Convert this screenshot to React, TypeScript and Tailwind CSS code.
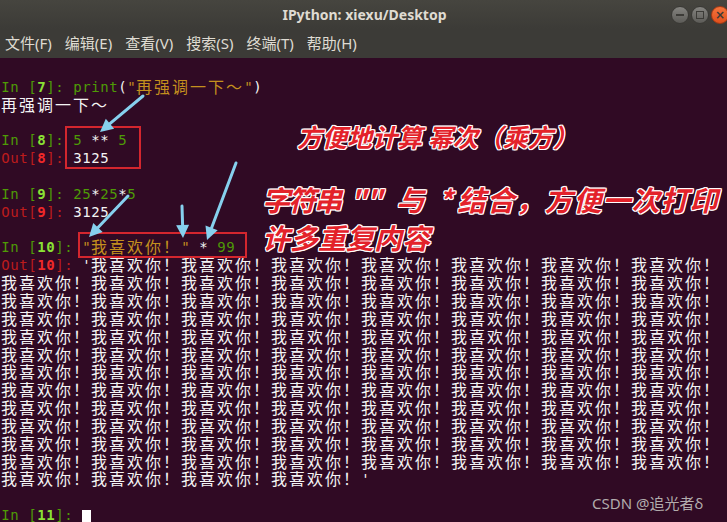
import React from 'react';

const G = 'text-[#4e9a06]';
const GB = 'text-[#8ae234] font-bold';
const R = 'text-[#bd1c1c]';
const RB = 'text-[#ef2929] font-bold';
const Y = 'text-[#c4901e]';
const W = 'text-[#f4f4f4]';

type Seg = [string, string];

const isWide = (c: string) => c.charCodeAt(0) > 0x2e80;

function Cells({ t, c }: { t: string; c: string }) {
  return (
    <>
      {Array.from(t).map((ch, i) =>
        isWide(ch) ? (
          <span key={i} className={`inline-block w-[18px] h-[17.85px] align-top text-[16px] ${c}`}>
            {ch}
          </span>
        ) : (
          <span key={i} className={`inline-block w-[9px] h-[17.85px] align-top text-center text-[14px] ${c}`}>
            {ch === ' ' ? '\u00a0' : ch}
          </span>
        )
      )}
    </>
  );
}

const L = '我喜欢你！';

const rows: Seg[][] = [
  [],
  [['In [', G], ['7', GB], [']: ', G], ['print', G], ['(', W], ['"再强调一下～"', Y], [')', W]],
  [['再强调一下～', W]],
  [],
  [['In [', G], ['8', GB], [']: ', G], ['5', G], [' ** ', W], ['5', G]],
  [['Out[', R], ['8', RB], [']: ', R], ['3125', W]],
  [],
  [['In [', G], ['9', GB], [']: ', G], ['25', G], ['*', W], ['25', G], ['*', W], ['5', G]],
  [['Out[', R], ['9', RB], [']: ', R], ['3125', W]],
  [],
  [['In [', G], ['10', GB], [']: ', G], ['"' + L + '"', Y], [' * ', W], ['99', G]],
  [['Out[', R], ['10', RB], [']: ', R], ["'" + L.repeat(7), W]],
  ...Array.from({ length: 11 }, () => [[L.repeat(8), W]] as Seg[]),
  [[L.repeat(4) + "'", W]],
  [],
];

function Arrow({ x1, y1, x2, y2 }: { x1: number; y1: number; x2: number; y2: number }) {
  const dx = x2 - x1;
  const dy = y2 - y1;
  const len = Math.hypot(dx, dy);
  const ux = dx / len;
  const uy = dy / len;
  const hl = 13;
  const hw = 6.5;
  const bx = x2 - ux * hl;
  const by = y2 - uy * hl;
  const px = -uy;
  const py = ux;
  const pts = `${x2},${y2} ${bx + px * hw},${by + py * hw} ${bx - px * hw},${by - py * hw}`;
  return (
    <g>
      <line x1={x1} y1={y1} x2={bx + ux * 2} y2={by + uy * 2} stroke="#86d0ee" strokeWidth={3} strokeLinecap="round" />
      <polygon points={pts} fill="#86d0ee" />
    </g>
  );
}

const shadow =
  '[text-shadow:1px_0_0_#fff,-1px_0_0_#fff,0_1px_0_#fff,0_-1px_0_#fff,1px_1px_0_#fff,-1px_-1px_0_#fff,1px_-1px_0_#fff,-1px_1px_0_#fff]';

export default function App() {
  return (
    <div className="relative w-[727px] h-[522px] overflow-hidden bg-[#300a24]">
      {/* title bar */}
      <div className="flex items-center h-[29px] bg-gradient-to-b from-[#46453f] to-[#3c3b37]">
        <div className="flex-1" />
        <div className="text-[14px] font-bold text-[#dfdbd2] font-['Noto_Sans',sans-serif] leading-none">
          IPython: xiexu/Desktop
        </div>
        <div className="flex-1 flex justify-end items-center gap-[2px] mr-[-2px]">
          <div className="w-[18px] h-[18px] rounded-full bg-gradient-to-b from-[#858480] to-[#5c5b57] border border-[#3a3935] flex items-center justify-center">
            <div className="w-[8px] h-[2px] bg-[#3c3b37]" />
          </div>
          <div className="w-[18px] h-[18px] rounded-full bg-gradient-to-b from-[#858480] to-[#5c5b57] border border-[#3a3935] flex items-center justify-center">
            <div className="w-[8px] h-[8px] border-[1.5px] border-[#3c3b37]" />
          </div>
          <div className="w-[18px] h-[18px] rounded-full bg-gradient-to-b from-[#f4743c] to-[#e0501c] border border-[#a63a14] flex items-center justify-center text-[12px] leading-none font-bold text-[#3c3b37] font-['DejaVu_Sans',sans-serif]">
            ×
          </div>
        </div>
      </div>
      {/* menu bar */}
      <div className="flex items-center h-[29px] bg-[#3c3b37] pl-[5px] gap-[13px] text-[15px] text-[#dfdbd2] font-['Noto_Sans','Noto_Sans_CJK_SC',sans-serif] leading-none">
        <span>文件(F)</span>
        <span>编辑(E)</span>
        <span>查看(V)</span>
        <span>搜索(S)</span>
        <span>终端(T)</span>
        <span>帮助(H)</span>
      </div>
      {/* terminal */}
      <div className="h-[464px] overflow-hidden pt-[3px] pl-[1px] font-['DejaVu_Sans_Mono','Noto_Sans_CJK_SC',monospace]">
        {rows.map((r, i) => (
          <div key={i} className="h-[17.85px] whitespace-nowrap leading-[17.85px]">
            {r.map((s, j) => (
              <Cells key={j} t={s[0]} c={s[1]} />
            ))}
          </div>
        ))}
        <div className="h-[17.85px] whitespace-nowrap leading-[17.85px]">
          <Cells t="In [" c={G} />
          <Cells t="11" c={GB} />
          <Cells t="]: " c={G} />
          <span className="inline-block w-[9px] h-[15px] align-top mt-[3px] bg-white" />
        </div>
      </div>

      {/* annotations */}
      <div className="absolute left-[65px] top-[126px] w-[76px] h-[43px] border-2 border-[#d3262e]" />
      <div className="absolute left-[78px] top-[232px] w-[169px] h-[26px] border-2 border-[#d3262e]" />

      <svg className="absolute inset-0 pointer-events-none" width="727" height="522">
        <Arrow x1={143} y1={96} x2={100} y2={132} />
        <Arrow x1={128} y1={196} x2={89} y2={237} />
        <Arrow x1={182} y1={206} x2={183} y2={238} />
        <Arrow x1={236} y1={163} x2={207} y2={240} />
      </svg>

      <div
        className={`absolute left-[297px] top-[121px] text-[25px] leading-[30px] italic font-bold text-[#e3222a] whitespace-nowrap font-['Noto_Sans_CJK_SC',sans-serif] ${shadow}`}
      >
        方便地计算 幂次（乘方）
      </div>
      <div
        className={`absolute left-[262px] top-[180px] text-[28px] leading-[38px] italic font-bold text-[#e3222a] whitespace-nowrap font-['Noto_Sans_CJK_SC',sans-serif] ${shadow}`}
      >
        <span className="tracking-[-2px]">字符串</span>
        <span className="ml-[10px]">""</span>
        <span className="ml-[14px]">与</span>
        <span className="ml-[14px]">*</span>
        <span className="ml-[5px] tracking-[1px]">结合，方便一次打印</span>
      </div>
      <div
        className={`absolute left-[262px] top-[218px] text-[28px] leading-[38px] italic font-bold text-[#e3222a] whitespace-nowrap font-['Noto_Sans_CJK_SC',sans-serif] ${shadow}`}
      >
        许多重复内容
      </div>

      <div className="absolute left-[592px] top-[493px] text-[15px] leading-[20px] text-[#b2acac] whitespace-nowrap font-['Noto_Sans','Noto_Sans_CJK_SC',sans-serif]">
        CSDN @追光者δ
      </div>
    </div>
  );
}
